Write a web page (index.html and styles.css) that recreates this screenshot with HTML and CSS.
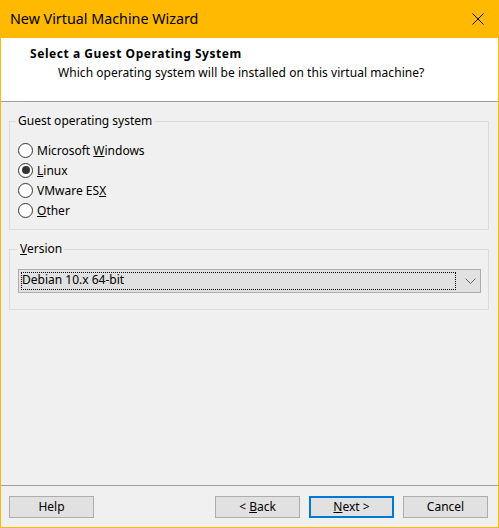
FILE: index.html
```html
<!DOCTYPE html>
<html>
<head>
<meta charset="utf-8">
<link rel="stylesheet" href="styles.css">
</head>
<body>
<div class="window">
  <div class="titlebar">
    <span class="title">New Virtual Machine Wizard</span>
    <svg class="close" width="12" height="12" viewBox="0 0 12 12"><path d="M0.5 0.5 L11.5 11.5 M11.5 0.5 L0.5 11.5" stroke="#000" stroke-width="1" fill="none"/></svg>
  </div>
  <div class="header">
    <div class="h-title">Select a Guest Operating System</div>
    <div class="h-sub">Which operating system will be installed on this virtual machine?</div>
  </div>
  <div class="content">
    <fieldset class="group group-os">
      <legend>Guest operating system</legend>
      <div class="radio"><span class="circle"></span><span>Microsoft <u>W</u>indows</span></div>
      <div class="radio"><span class="circle checked"></span><span><u>L</u>inux</span></div>
      <div class="radio"><span class="circle"></span><span>VMware ES<u>X</u></span></div>
      <div class="radio"><span class="circle"></span><span><u>O</u>ther</span></div>
    </fieldset>
    <fieldset class="group group-ver">
      <legend><u>V</u>ersion</legend>
      <div class="combo">
        <span class="combo-text">Debian 10.x 64-bit</span>
        <svg class="chev" width="11" height="6" viewBox="0 0 11 6"><path d="M0.5 0.5 L5.5 5.5 L10.5 0.5" stroke="#666" stroke-width="1" fill="none"/></svg>
      </div>
    </fieldset>
  </div>
  <div class="footer">
    <button class="btn">Help</button>
    <div class="spacer"></div>
    <button class="btn">&lt; <u>B</u>ack</button>
    <button class="btn default"><u>N</u>ext &gt;</button>
    <button class="btn">Cancel</button>
  </div>
</div>
</body>
</html>
```
FILE: styles.css
```css
* { box-sizing: border-box; }
html, body { margin: 0; padding: 0; }
body {
  width: 499px;
  height: 528px;
  font-family: "Noto Sans", "Liberation Sans", sans-serif;
  font-size: 12px;
  color: #000;
  overflow: hidden;
}
.window {
  width: 499px;
  height: 528px;
  display: flex;
  flex-direction: column;
  background: #f0f0f0;
  border: 1px solid #ffb900;
  border-top: 0;
}
.titlebar {
  height: 38px;
  flex: none;
  background: #ffb900;
  margin: 0 -1px;
  display: flex;
  align-items: center;
  padding: 0 15px 1px 10px;
}
.title {
  font-size: 14.3px;
  flex: 1;
  color: #000;
}
.close { display: block; margin-right: 0; }
.header {
  height: 64px;
  flex: none;
  background: #fff;
  border-bottom: 1px solid #a0a0a0;
  padding: 7px 0 0 29px;
}
.h-title {
  font-weight: bold;
  line-height: 18px;
  letter-spacing: 0.55px;
}
.h-sub {
  line-height: 18px;
  margin-top: 1px;
  padding-left: 28px;
  letter-spacing: 0.05px;
}
.content {
  flex: 1;
  padding: 11px 9px 0 8px;
}
.group {
  margin: 0;
  border: 1px solid #dcdcdc;
  padding: 0 7px 0 6px;
  min-width: 0;
}
.group legend {
  padding: 0 2px;
  line-height: 16px;
  height: 16px;
}
.group-os { padding-top: 11px; padding-bottom: 9px; }
.group-ver { margin-top: 11px; padding-top: 12px; padding-bottom: 16px; padding-left: 8px; }
.radio {
  height: 20px;
  display: flex;
  align-items: center;
  gap: 4px;
  padding-left: 2px;
}
.circle {
  width: 15px;
  height: 15px;
  border: 1px solid #333;
  border-radius: 50%;
  background: #fff;
  flex: none;
  display: flex;
  align-items: center;
  justify-content: center;
}
.circle.checked::after {
  content: "";
  width: 8px;
  height: 8px;
  border-radius: 50%;
  background: #333;
}
.combo {
  height: 24px;
  background: #e1e1e1;
  border: 1px solid #adadad;
  display: flex;
  align-items: center;
  padding: 2px 4px 2px 2px;
}
.combo-text {
  flex: 1;
  height: 18px;
  line-height: 16px;
  outline: 1px dotted #000;
  outline-offset: -1px;
  padding-left: 1px;
  margin-right: 9px;
}
.chev { display: block; }
.footer {
  flex: none;
  height: 42px;
  border-top: 1px solid #a0a0a0;
  display: flex;
  align-items: flex-start;
  gap: 9px;
  padding: 10px 10px 0 8px;
}
.spacer { flex: 1; }
.btn {
  width: 85px;
  height: 22px;
  background: #e1e1e1;
  border: 1px solid #adadad;
  font: inherit;
  color: #000;
  padding: 0;
  line-height: 18px;
}
.btn.default { border: 2px solid #0078d7; }
```
